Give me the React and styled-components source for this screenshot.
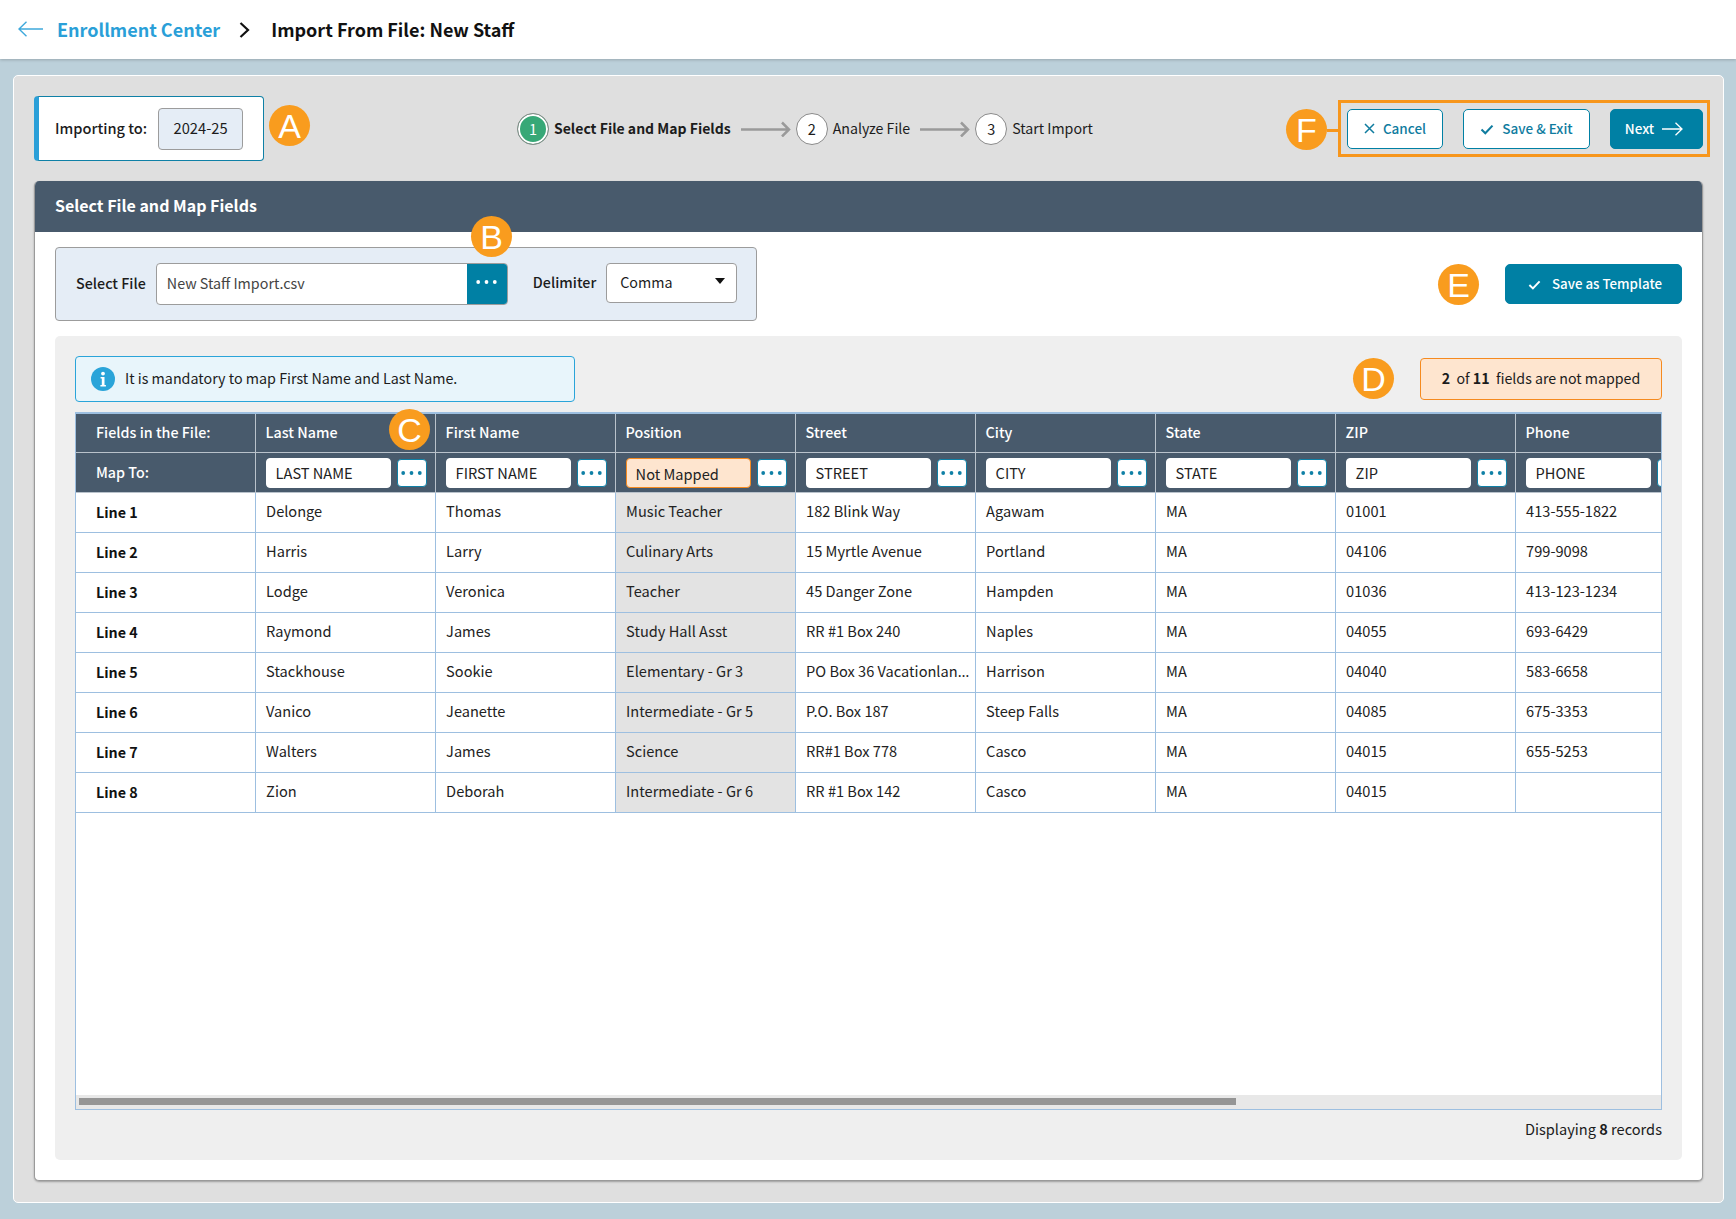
import React from "react";
import styled, { createGlobalStyle } from "styled-components";

const GlobalStyle = createGlobalStyle`
  * { box-sizing: border-box; }
  html, body { margin: 0; padding: 0; }
  body { font-family: "Noto Sans CJK SC", "Noto Sans", sans-serif; color: #1c1c1c; background: #bcd0da; }
`;

const Root = styled.div`
  position: relative;
  height: 1219px;
  overflow: hidden;
  background: #bcd0da;
`;

const TopHeader = styled.header`
  height: 59px;
  background: #fff;
  display: flex;
  align-items: center;
  padding-left: 18px;
  padding-bottom: 2px;
  box-shadow: 0 1px 3px rgba(0, 0, 0, 0.2);
`;
const BackLink = styled.a`
  margin-left: 14px;
  font-size: 18px;
  font-weight: 600;
  color: #2a9fd8;
`;
const CrumbChevron = styled.svg`
  margin: 2px 21px 0 19px;
  flex: none;
`;
const PageTitle = styled.h1`
  margin: 0;
  font-size: 18px;
  font-weight: 600;
  color: #111;
`;

const Panel = styled.main`
  height: 1128px;
  margin: 16px 12px 0 13px;
  padding: 20px 20px 21px 20px;
  background: #dfdfdf;
  border: 1px solid #fff;
  border-radius: 5px;
  display: flex;
  flex-direction: column;
`;

const TopRow = styled.div`
  height: 65px;
  margin-bottom: 20px;
  display: flex;
  align-items: center;
  flex: none;
`;
const ImportBox = styled.div`
  width: 230px;
  height: 65px;
  padding: 0 0 2px 16px;
  background: #fff;
  border: 1px solid #0f80a6;
  border-left: 5px solid #2a9fd8;
  border-radius: 4px;
  display: flex;
  align-items: center;
  gap: 11px;
  font-size: 14.6px;
  font-weight: 500;
`;
const YearField = styled.div`
  width: 85px;
  height: 42px;
  margin-top: 2px;
  padding-bottom: 2px;
  background: #e5edf6;
  border: 1px solid #9c9c9c;
  border-radius: 4px;
  display: flex;
  align-items: center;
  justify-content: center;
  font-size: 14.7px;
  font-weight: 400;
`;

const Stepper = styled.ol`
  list-style: none;
  margin: 0 0 0 253px;
  padding: 0;
  display: flex;
  align-items: center;
`;
const Step = styled.li`
  display: flex;
  align-items: center;
  gap: 5px;
  font-size: ${(p) => (p.$active ? 14 : 14.2)}px;
  font-weight: ${(p) => (p.$active ? 600 : 400)};
`;
const StepLabel = styled.span`
  padding-bottom: 2px;
`;
const StepDot = styled.span`
  width: 32px;
  height: 32px;
  border-radius: 50%;
  border: 1px solid #8a8a8a;
  background: ${(p) => (p.$active ? "#37a877" : "#fff")};
  box-shadow: ${(p) => (p.$active ? "inset 0 0 0 2px #fff" : "none")};
  color: ${(p) => (p.$active ? "#fff" : "#1c1c1c")};
  display: flex;
  align-items: center;
  justify-content: center;
  font-size: 14.5px;
  font-weight: 400;
`;
const StepArrow = styled.svg`
  margin: 0 5px 0 10px;
  flex: none;
`;

const Actions = styled.div`
  position: relative;
  margin-left: auto;
  display: flex;
  align-items: center;
  gap: 20px;
`;
const ActionFrame = styled.div`
  position: absolute;
  left: -9px;
  right: -7px;
  top: -9px;
  bottom: -8px;
  border: 3px solid #f7961c;
  pointer-events: none;
`;
const FrameTick = styled.div`
  position: absolute;
  left: -20px;
  top: 20px;
  width: 11px;
  height: 3px;
  background: #f7961c;
`;
const Button = styled.button`
  height: 40px;
  width: ${(p) => p.$w}px;
  padding: 0 ${(p) => p.$pr || 0}px 2px ${(p) => p.$pl || 0}px;
  border-radius: 5px;
  border: 1px solid #0080a4;
  background: ${(p) => (p.$solid ? "#0080a4" : "#fff")};
  color: ${(p) => (p.$solid ? "#fff" : "#0f7c9f")};
  font-family: inherit;
  font-size: ${(p) => p.$size || 13.5}px;
  font-weight: 500;
  display: flex;
  align-items: center;
  justify-content: center;
  gap: ${(p) => p.$gap || 8}px;
  svg { margin-top: 2px; }
`;

const Card = styled.section`
  flex: 1;
  min-height: 0;
  background: #fff;
  border: 1px solid #9a9a9a;
  border-top: 0;
  border-radius: 5px;
  box-shadow: 0 1px 2px rgba(0, 0, 0, 0.3);
  display: flex;
  flex-direction: column;
  overflow: hidden;
`;
const CardHead = styled.div`
  height: 51px;
  flex: none;
  background: #485a6c;
  color: #fff;
  display: flex;
  align-items: center;
  padding-left: 20px;
  padding-bottom: 4px;
  font-size: 16px;
  font-weight: 600;
`;
const CardBody = styled.div`
  flex: 1;
  min-height: 0;
  padding: 15px 20px 20px 20px;
  display: flex;
  flex-direction: column;
  gap: 15px;
`;
const FileRow = styled.div`
  display: flex;
  align-items: center;
  justify-content: space-between;
  flex: none;
`;
const FileBox = styled.div`
  width: 702px;
  height: 74px;
  background: #e5edf6;
  border: 1px solid #9c9c9c;
  border-radius: 4px;
  display: flex;
  align-items: center;
  padding-left: 20px;
  font-size: 14.3px;
`;
const FieldLabel = styled.span`
  font-weight: 500;
  margin-right: ${(p) => p.$mr}px;
  padding-bottom: ${(p) => p.$pb}px;
`;
const FileField = styled.div`
  width: 352px;
  height: 42px;
  margin-right: 25px;
  background: #fff;
  border: 1px solid #9c9c9c;
  border-radius: 4px;
  display: flex;
  align-items: center;
  justify-content: space-between;
  padding-left: 10px;
  color: #444;
  overflow: hidden;
`;
const FileName = styled.span`
  padding-bottom: 4px;
`;
const BrowseButton = styled.span`
  width: 40px;
  height: 100%;
  padding-bottom: 4px;
  background: #0080a4;
  display: flex;
  align-items: center;
  justify-content: center;
`;
const SelectBox = styled.div`
  position: relative;
  width: 131px;
  height: 40px;
  margin-bottom: 2px;
  background: #fff;
  border: 1px solid #9c9c9c;
  border-radius: 4px;
  display: flex;
  align-items: center;
  padding-left: 13px;
  padding-bottom: 4px;
  &::after {
    content: "";
    position: absolute;
    right: 11px;
    top: 14px;
    border-left: 5px solid transparent;
    border-right: 5px solid transparent;
    border-top: 6px solid #111;
  }
`;

const MapSection = styled.div`
  flex: 1;
  min-height: 0;
  background: #efefef;
  border-radius: 5px;
  padding: 20px 20px 0 20px;
  display: flex;
  flex-direction: column;
`;
const NoticeRow = styled.div`
  display: flex;
  align-items: center;
  justify-content: space-between;
  flex: none;
  height: 46px;
  margin-bottom: 10px;
`;
const InfoNote = styled.div`
  width: 500px;
  height: 46px;
  background: #e8f5fb;
  border: 1px solid #2aa4d9;
  border-radius: 4px;
  display: flex;
  align-items: center;
  gap: 10px;
  padding-left: 15px;
  font-size: 14.3px;
`;
const NoteText = styled.span`
  padding-bottom: 4px;
`;
const CountBadge = styled.div`
  width: 242px;
  height: 42px;
  padding-bottom: 2px;
  background: #fee5cf;
  border: 1px solid #f58a1f;
  border-radius: 4px;
  display: flex;
  align-items: center;
  justify-content: center;
  font-size: 14.2px;
  white-space: pre;
  b { font-weight: 600; }
`;

const TableFrame = styled.div`
  flex: 1;
  min-height: 0;
  background: #fff;
  border: 1px solid #9dbfe0;
  border-top-width: 2px;
  display: flex;
  flex-direction: column;
  overflow: hidden;
`;
const GridArea = styled.div`
  flex: 1;
  min-height: 0;
  overflow: hidden;
`;
const Row = styled.div`
  display: grid;
  grid-template-columns: 178.6px repeat(8, 180px);
  width: max-content;
  height: ${(p) => p.$h || 40}px;
  background: ${(p) => (p.$head ? "#485a6c" : "#fff")};
  border-bottom: 1px solid ${(p) => (p.$head ? "#b9c2cb" : "#9dbfe0")};
`;
const HeadCell = styled.div`
  display: flex;
  align-items: center;
  gap: 6px;
  padding-left: ${(p) => (p.$first ? 20 : 10)}px;
  padding-top: ${(p) => (p.$map ? 1 : 0)}px;
  padding-bottom: ${(p) => (p.$map ? 0 : 3)}px;
  border-left: ${(p) => (p.$first ? "0" : "1px solid #b9c2cb")};
  color: #fff;
  font-size: 14.3px;
  font-weight: 500;
  white-space: nowrap;
`;
const MapField = styled.div`
  width: 125px;
  height: 30px;
  flex: none;
  border-radius: 4px;
  border: 1px solid ${(p) => (p.$warn ? "#f58a1f" : "#fff")};
  background: ${(p) => (p.$warn ? "#fee5cf" : "#fff")};
  color: #222;
  display: flex;
  align-items: center;
  padding-left: 9px;
  font-size: 14.6px;
  font-weight: 400;
  padding-top: ${(p) => (p.$warn ? 1 : 0)}px;
  padding-bottom: ${(p) => (p.$warn ? 0 : 1)}px;
`;
const DotsButton = styled.span`
  width: 30px;
  height: 28px;
  flex: none;
  background: #fff;
  border: 1px solid #0f80a6;
  border-radius: 4px;
  display: flex;
  align-items: center;
  justify-content: center;
`;
const Cell = styled.div`
  display: flex;
  align-items: center;
  min-width: 0;
  padding-left: ${(p) => (p.$first ? 20 : 10.5)}px;
  padding-bottom: ${(p) => (p.$first ? 2 : 4)}px;
  border-left: ${(p) => (p.$first ? "0" : "1px solid #9dbfe0")};
  background: ${(p) => (p.$muted ? "#e3e3e3" : "transparent")};
  font-size: ${(p) => (p.$first ? 14.3 : 14.6)}px;
  font-weight: ${(p) => (p.$first ? 600 : 400)};
  color: ${(p) => (p.$first ? "#111" : "#222")};
`;
const CellText = styled.span`
  white-space: nowrap;
`;
const Ellipsis = styled.span`
  font-family: "Noto Sans", sans-serif;
`;
const ScrollTrack = styled.div`
  height: 14px;
  flex: none;
  background: #e8e8e8;
  padding: 3px 2px 4px 3px;
`;
const ScrollThumb = styled.div`
  height: 7px;
  background: #959595;
`;
const Footer = styled.div`
  height: 50px;
  padding-bottom: 14px;
  flex: none;
  display: flex;
  align-items: center;
  justify-content: flex-end;
  font-size: 14.6px;
  white-space: pre;
  b { font-weight: 600; }
`;

const Marker = styled.div`
  position: absolute;
  left: ${(p) => p.$x}px;
  top: ${(p) => p.$y}px;
  width: 41px;
  height: 41px;
  border-radius: 50%;
  background: #f99c1e;
  color: #fff;
  display: flex;
  align-items: center;
  justify-content: center;
  font-family: "Liberation Sans", Arial, sans-serif;
  font-size: 34px;
  line-height: 1;
`;

const Dots = ({ color }) => (
  <svg width="21" height="6" viewBox="0 0 21 6" aria-hidden="true">
    <circle cx="2.2" cy="3" r="1.9" fill={color} />
    <circle cx="10.5" cy="3" r="1.9" fill={color} />
    <circle cx="18.8" cy="3" r="1.9" fill={color} />
  </svg>
);
const Check = ({ color, size = 14 }) => (
  <svg width={size} height={size} viewBox="0 0 14 14" fill="none" stroke={color} strokeWidth="2.1" aria-hidden="true">
    <path d="M1.5 7.5 5.3 11.2 12.5 3.6" />
  </svg>
);
const Cross = () => (
  <svg width="11" height="11" viewBox="0 0 11 11" fill="none" stroke="#0f7c9f" strokeWidth="1.5" aria-hidden="true">
    <path d="M1 1 10 10M10 1 1 10" />
  </svg>
);
const LongArrow = () => (
  <StepArrow width="50" height="16" viewBox="0 0 50 16" fill="none" stroke="#9a9a9a" strokeWidth="2.5" aria-hidden="true">
    <path d="M0 8.5H48M41 1.5 48 8.5 41 15.5" />
  </StepArrow>
);
const InfoIcon = () => (
  <svg width="24" height="24" viewBox="0 0 24 24" aria-hidden="true">
    <circle cx="12" cy="12" r="12" fill="#2aa4d9" />
    <circle cx="12" cy="6.6" r="1.9" fill="#fff" />
    <path d="M9.6 10h3.9v8h1.4v1.6H9.4V18h1.4v-6.4H9.6z" fill="#fff" />
  </svg>
);

const columns = [
  { name: "Last Name", map: "LAST NAME" },
  { name: "First Name", map: "FIRST NAME" },
  { name: "Position", map: "Not Mapped", warn: true },
  { name: "Street", map: "STREET" },
  { name: "City", map: "CITY" },
  { name: "State", map: "STATE" },
  { name: "ZIP", map: "ZIP" },
  { name: "Phone", map: "PHONE" },
];
const rows = [
  ["Delonge", "Thomas", "Music Teacher", "182 Blink Way", "Agawam", "MA", "01001", "413-555-1822"],
  ["Harris", "Larry", "Culinary Arts", "15 Myrtle Avenue", "Portland", "MA", "04106", "799-9098"],
  ["Lodge", "Veronica", "Teacher", "45 Danger Zone", "Hampden", "MA", "01036", "413-123-1234"],
  ["Raymond", "James", "Study Hall Asst", "RR #1 Box 240", "Naples", "MA", "04055", "693-6429"],
  ["Stackhouse", "Sookie", "Elementary - Gr 3", "PO Box 36 Vacationlan…", "Harrison", "MA", "04040", "583-6658"],
  ["Vanico", "Jeanette", "Intermediate - Gr 5", "P.O. Box 187", "Steep Falls", "MA", "04085", "675-3353"],
  ["Walters", "James", "Science", "RR#1 Box 778", "Casco", "MA", "04015", "655-5253"],
  ["Zion", "Deborah", "Intermediate - Gr 6", "RR #1 Box 142", "Casco", "MA", "04015", ""],
];
const markers = [
  ["A", 269, 105],
  ["B", 471, 216],
  ["C", 389, 409],
  ["D", 1353, 358],
  ["E", 1438, 264],
  ["F", 1286, 109],
];

const renderValue = (v) =>
  v.endsWith("…") ? (
    <>
      {v.slice(0, -1)}
      <Ellipsis>…</Ellipsis>
    </>
  ) : (
    v
  );

export default function App() {
  return (
    <Root>
      <GlobalStyle />
      <TopHeader>
        <svg width="25" height="16" viewBox="0 0 25 16" fill="none" stroke="#3fa9dc" strokeWidth="1.4" aria-hidden="true">
          <path d="M25 8H1M8.5 .8 1 8l7.5 7.2" />
        </svg>
        <BackLink>Enrollment Center</BackLink>
        <CrumbChevron width="11" height="16" viewBox="0 0 11 16" fill="none" stroke="#111" strokeWidth="2.2" aria-hidden="true">
          <path d="M1.5 1 9 8l-7.5 7" />
        </CrumbChevron>
        <PageTitle>Import From File: New Staff</PageTitle>
      </TopHeader>
      <Panel>
        <TopRow>
          <ImportBox>
            Importing to:
            <YearField>2024-25</YearField>
          </ImportBox>
          <Stepper>
            <Step $active>
              <StepDot $active>1</StepDot>
              <StepLabel>Select File and Map Fields</StepLabel>
            </Step>
            <LongArrow />
            <Step>
              <StepDot>2</StepDot>
              <StepLabel>Analyze File</StepLabel>
            </Step>
            <LongArrow />
            <Step>
              <StepDot>3</StepDot>
              <StepLabel>Start Import</StepLabel>
            </Step>
          </Stepper>
          <Actions>
            <Button $w={96}>
              <Cross />
              Cancel
            </Button>
            <Button $w={127}>
              <Check color="#0f7c9f" />
              Save &amp; Exit
            </Button>
            <Button $w={93} $solid $pr={5}>
              Next
              <svg width="21" height="14" viewBox="0 0 21 14" fill="none" stroke="#fff" strokeWidth="1.3" aria-hidden="true">
                <path d="M0 7H20M13.5 .8 20 7l-6.5 6.2" />
              </svg>
            </Button>
            <ActionFrame />
            <FrameTick />
          </Actions>
        </TopRow>
        <Card>
          <CardHead>Select File and Map Fields</CardHead>
          <CardBody>
            <FileRow>
              <FileBox>
                <FieldLabel $mr={10} $pb={4}>
                  Select File
                </FieldLabel>
                <FileField>
                  <FileName>New Staff Import.csv</FileName>
                  <BrowseButton>
                    <Dots color="#fff" />
                  </BrowseButton>
                </FileField>
                <FieldLabel $mr={10} $pb={6}>
                  Delimiter
                </FieldLabel>
                <SelectBox>Comma</SelectBox>
              </FileBox>
              <Button $w={177} $size={13.3} $solid $gap={11} $pl={3}>
                <Check color="#fff" size={13} />
                Save as Template
              </Button>
            </FileRow>
            <MapSection>
              <NoticeRow>
                <InfoNote>
                  <InfoIcon />
                  <NoteText>It is mandatory to map First Name and Last Name.</NoteText>
                </InfoNote>
                <CountBadge>
                  <b>2</b>
                  {"  of "}
                  <b>11</b>
                  {"  fields are not mapped"}
                </CountBadge>
              </NoticeRow>
              <TableFrame>
                <GridArea>
                  <Row $head $h={39}>
                    <HeadCell $first>Fields in the File:</HeadCell>
                    {columns.map((c) => (
                      <HeadCell key={c.name}>{c.name}</HeadCell>
                    ))}
                  </Row>
                  <Row $head>
                    <HeadCell $first>Map To:</HeadCell>
                    {columns.map((c) => (
                      <HeadCell key={c.name} $map>
                        <MapField $warn={c.warn}>{c.map}</MapField>
                        <DotsButton>
                          <Dots color="#0f80a6" />
                        </DotsButton>
                      </HeadCell>
                    ))}
                  </Row>
                  {rows.map((r, i) => (
                    <Row key={i}>
                      <Cell $first>Line {i + 1}</Cell>
                      {r.map((v, j) => (
                        <Cell key={j} $muted={j === 2}>
                          <CellText>{renderValue(v)}</CellText>
                        </Cell>
                      ))}
                    </Row>
                  ))}
                </GridArea>
                <ScrollTrack>
                  <ScrollThumb style={{ width: `${(1157 / 1580) * 100}%` }} />
                </ScrollTrack>
              </TableFrame>
              <Footer>
                {"Displaying "}
                <b>8</b>
                {" records"}
              </Footer>
            </MapSection>
          </CardBody>
        </Card>
      </Panel>
      {markers.map(([l, x, y]) => (
        <Marker key={l} $x={x} $y={y}>
          {l}
        </Marker>
      ))}
    </Root>
  );
}
